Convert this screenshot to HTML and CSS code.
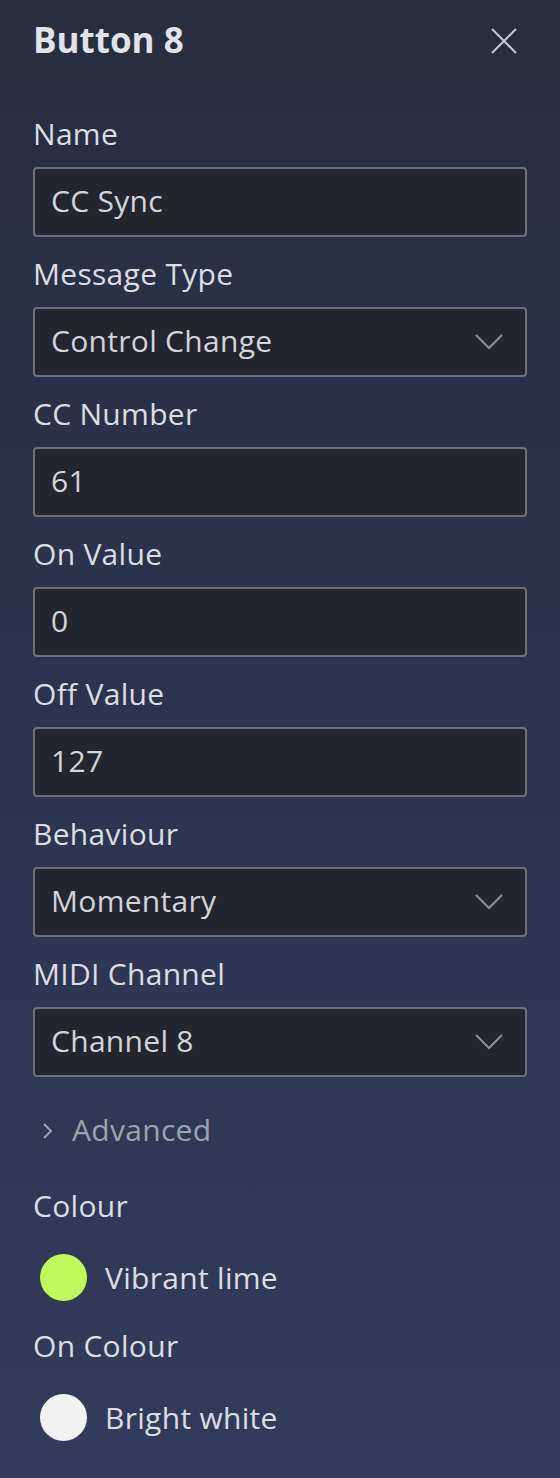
FILE: index.html
```html
<!DOCTYPE html>
<html lang="en">
<head>
  <meta charset="UTF-8">
  <title>Button 8</title>
  <meta name="viewport" content="width=device-width, initial-scale=1.0">
  <link rel="stylesheet" href="styles.css">
</head>
<body>

  <section class="panel">
    <header class="panel-head">
      <h1>Button 8</h1>
      <button class="close" type="button" aria-label="Close">
        <svg width="28" height="28" viewBox="0 0 28 28"><path d="M2 2 L26 26 M26 2 L2 26" stroke="currentColor" stroke-width="2" fill="none"/></svg>
      </button>
    </header>

    <div class="form-group">
      <label>Name</label>
      <div class="field">CC Sync</div>
    </div>

    <div class="form-group">
      <label>Message Type</label>
      <div class="field select">Control Change <span class="chev"><svg width="28" height="16" viewBox="0 0 28 16"><path d="M1 1 L14 14 L27 1" stroke="currentColor" stroke-width="2" fill="none"/></svg></span></div>
    </div>

    <div class="form-group">
      <label>CC Number</label>
      <div class="field">61</div>
    </div>

    <div class="form-group">
      <label>On Value</label>
      <div class="field">0</div>
    </div>

    <div class="form-group">
      <label>Off Value</label>
      <div class="field">127</div>
    </div>

    <div class="form-group">
      <label>Behaviour</label>
      <div class="field select">Momentary <span class="chev"><svg width="28" height="16" viewBox="0 0 28 16"><path d="M1 1 L14 14 L27 1" stroke="currentColor" stroke-width="2" fill="none"/></svg></span></div>
    </div>

    <div class="form-group">
      <label>MIDI Channel</label>
      <div class="field select">Channel 8 <span class="chev"><svg width="28" height="16" viewBox="0 0 28 16"><path d="M1 1 L14 14 L27 1" stroke="currentColor" stroke-width="2" fill="none"/></svg></span></div>
    </div>

    <div class="advanced">
      <svg width="12" height="18" viewBox="0 0 12 18"><path d="M2 2 L9 9 L2 16" stroke="currentColor" stroke-width="2" fill="none"/></svg>
      <span>Advanced</span>
    </div>

    <div class="colour-group">
      <label>Colour</label>
      <div class="swatch-row"><span class="swatch lime"></span>Vibrant lime</div>
    </div>

    <div class="colour-group">
      <label>On Colour</label>
      <div class="swatch-row"><span class="swatch white"></span>Bright white</div>
    </div>
  </section>

</body>
</html>
```

FILE: styles.css
```css
:root {
  --text-color: #dcdde3;
  --field-bg: #23262f;
  --field-border: #6c6f77;
}

html, body {
  height: 100%;
}

body {
  margin: 0;
  font-family: "Open Sans", "Noto Sans", sans-serif;
  letter-spacing: 0.3px;
  background: linear-gradient(to bottom, #282d3f 0%, #2d3450 50%, #323b5b 100%);
  color: var(--text-color);
}

.panel {
  padding: 0 33px;
}

.panel-head {
  display: flex;
  align-items: center;
  justify-content: space-between;
  height: 78px;
  margin-bottom: 39px;
}

.panel-head h1 {
  margin: 0;
  font-size: 35px;
  font-weight: 700;
  letter-spacing: 0;
  color: #e2e3e8;
}

.close {
  background: none;
  border: none;
  padding: 0;
  margin-right: 9px;
  margin-top: 4px;
  color: #c5c7ce;
  display: flex;
}

.form-group {
  margin-bottom: 20px;
}

.form-group label,
.colour-group label {
  display: block;
  font-size: 30px;
  line-height: 34px;
  margin-bottom: 16px;
}

.field {
  box-sizing: border-box;
  height: 70px;
  padding: 0 16px 4px;
  display: flex;
  align-items: center;
  background: var(--field-bg);
  border: 2px solid var(--field-border);
  border-radius: 4px;
  font-size: 30px;
  color: #d3d4d9;
}

.select {
  justify-content: space-between;
}

.chev {
  color: #8b8e96;
  display: flex;
  margin-right: 6px;
  margin-top: 4px;
}

.advanced {
  display: flex;
  align-items: center;
  gap: 18px;
  padding-left: 9px;
  margin-top: 32px;
  margin-bottom: 39px;
  font-size: 30px;
  color: #9ea2ac;
}

.advanced svg {
  margin-top: 3px;
}

.colour-group label {
  margin-bottom: 30px;
}

.swatch-row {
  display: flex;
  align-items: center;
  gap: 18px;
  padding-left: 7px;
  font-size: 30px;
  height: 48px;
  margin-bottom: 28px;
}

.swatch {
  width: 47px;
  height: 47px;
  border-radius: 50%;
}

.lime {
  background: #c0f85c;
}

.white {
  background: #f2f2f3;
}
```
